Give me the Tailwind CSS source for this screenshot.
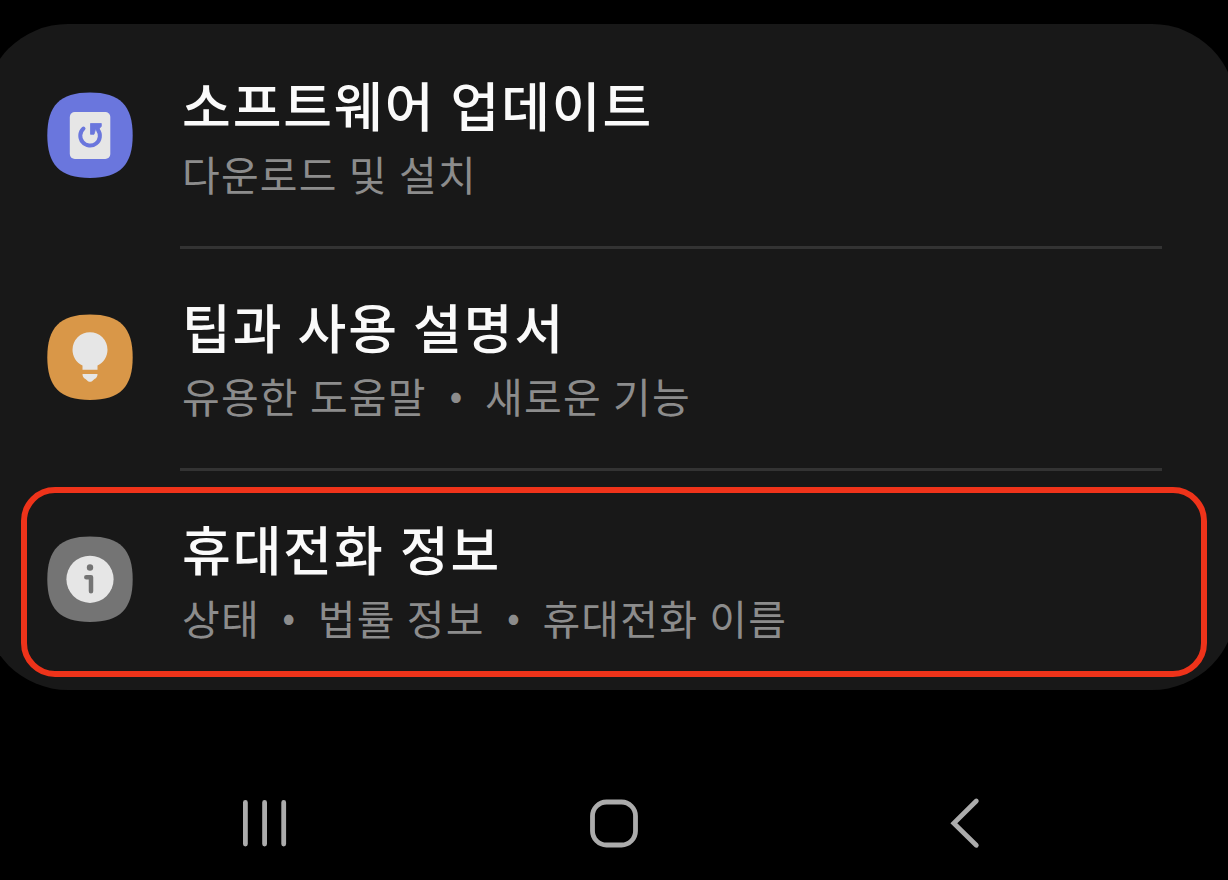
<!DOCTYPE html>
<html lang="ko">
<head>
    <meta charset="UTF-8">
    <meta name="viewport" content="width=device-width, initial-scale=1.0">
    <title>설정</title>
    <script src="https://cdn.jsdelivr.net/npm/@tailwindcss/browser@4"></script>
</head>
<body class="bg-black overflow-hidden font-['Noto_Sans_CJK_KR',sans-serif]">
    <div class="h-[880px] w-[1228px] flex flex-col overflow-hidden pt-6">
        <!-- Settings card -->
        <div class="relative -ml-4 w-[1252px] h-[666px] shrink-0 rounded-[84px] bg-[#181818] pl-[63px]">
            <!-- Software update -->
            <div class="h-[222px] flex items-center">
                <svg class="w-[86px] h-[86px] shrink-0" viewBox="0 0 86 86">
                    <path d="M43 .5C73 .5 85.700 13.500 85.700 43.300S73 86 43 86S.3 73 .3 43.300S13 .5 43 .5Z" fill="#6a76dd"/>
                    <rect x="22.800" y="20" width="40.500" height="47" rx="5" fill="#e6e6e6"/>
                    <path d="M36.500 36.500A9.800 9.800 0 1 0 51 38" fill="none" stroke="#6a76dd" stroke-width="4" stroke-linecap="round"/>
                    <path d="M43.500 31.500H54.300V34.300L51.500 37.500L48.500 37.500L47 42.300H43.500Z" fill="#6a76dd" stroke="#6a76dd" stroke-width=".8" stroke-linejoin="round"/>
                </svg>
                <div class="ml-[49px] pb-px">
                    <h2 class="text-[53px] leading-[74px] font-medium tracking-[1.9px] [word-spacing:-1.5px] text-[#fafafa]">소프트웨어 업데이트</h2>
                    <p class="mt-0.5 text-[41px] leading-[60px] tracking-[1.2px] [word-spacing:-1.5px] text-[#8c8c8c]">다운로드 및 설치</p>
                </div>
            </div>
            <!-- Tips and user manual -->
            <div class="h-[222px] flex items-center">
                <svg class="w-[86px] h-[86px] shrink-0" viewBox="0 0 86 86">
                    <path d="M43 .5C73 .5 85.700 13.500 85.700 43.300S73 86 43 86S.3 73 .3 43.300S13 .5 43 .5Z" fill="#d99748"/>
                    <path d="M35.500 55.700V51.500C29 48.500 25.500 42 25.500 35.700A17.500 17.500 0 0 1 60.500 35.700C60.500 42 57 48.500 50.500 51.500V55.700Z" fill="#e6e6e6"/>
                    <path d="M35.500 60H50.500C50.500 62.500 49.500 64 47.500 65L45 67.200Q43 68.500 41 67.200L38.500 65C36.500 64 35.500 62.500 35.500 60Z" fill="#e6e6e6"/>
                </svg>
                <div class="ml-[49px] pb-px">
                    <h2 class="text-[53px] leading-[74px] font-medium tracking-[1.9px] [word-spacing:-2.5px] text-[#fafafa]">팁과 사용 설명서</h2>
                    <p class="mt-0.5 text-[41px] leading-[60px] tracking-[1.2px] [word-spacing:-1.5px] text-[#8c8c8c]">유용한 도움말 <span class="inline-block w-9 text-center text-[38px] leading-none tracking-normal align-[4px]">•</span> 새로운 기능</p>
                </div>
            </div>
            <!-- About phone -->
            <div class="h-[222px] flex items-center">
                <svg class="w-[86px] h-[86px] shrink-0" viewBox="0 0 86 86">
                    <path d="M43 .5C73 .5 85.700 13.500 85.700 43.300S73 86 43 86S.3 73 .3 43.300S13 .5 43 .5Z" fill="#747474"/>
                    <circle cx="43" cy="43.300" r="23.600" fill="#e6e6e6"/>
                    <circle cx="43" cy="31.500" r="3.200" fill="#747474"/>
                    <path d="M39.300 41.200H44V55.200" fill="none" stroke="#747474" stroke-width="4.500" stroke-linecap="round" stroke-linejoin="round"/>
                </svg>
                <div class="ml-[49px] pb-px">
                    <h2 class="text-[53px] leading-[74px] font-medium tracking-[1.9px] [word-spacing:-1.5px] text-[#fafafa]">휴대전화 정보</h2>
                    <p class="mt-0.5 text-[41px] leading-[60px] tracking-[1.2px] [word-spacing:-1.5px] text-[#8c8c8c]">상태 <span class="inline-block w-[35.5px] text-center text-[38px] leading-none tracking-normal align-[4px]">•</span> 법률 정보 <span class="inline-block w-[35.5px] text-center text-[38px] leading-none tracking-normal align-[4px]">•</span> 휴대전화 이름</p>
                </div>
            </div>
            <!-- Row dividers -->
            <div class="absolute left-[196px] top-[222px] w-[982px] h-[3px] bg-[#333333]"></div>
            <div class="absolute left-[196px] top-[444px] w-[982px] h-[3px] bg-[#333333]"></div>
            <!-- Highlight -->
            <div class="absolute left-[37px] top-[463px] w-[1186px] h-[190px] rounded-[34px] border-6 border-[#ee331a]"></div>
        </div>

        <!-- Navigation bar -->
        <div class="mt-[103px] flex items-center">
            <svg class="ml-[240px] w-[50px] h-[60px]" viewBox="0 0 50 60">
                <path d="M5.400 9.500V51M24.600 9.500V51M43.700 9.500V51" stroke="#acacac" stroke-width="4.800" stroke-linecap="round"/>
            </svg>
            <svg class="ml-[294px] w-[60px] h-[60px]" viewBox="0 0 60 60">
                <rect x="8.500" y="9" width="43" height="43" rx="14" fill="none" stroke="#acacac" stroke-width="4.800"/>
            </svg>
            <svg class="ml-[296px] w-[50px] h-[60px]" viewBox="0 0 50 60">
                <path d="M36.300 8L13.800 30.300L36.300 52.300" fill="none" stroke="#acacac" stroke-width="4.800" stroke-linecap="round"/>
            </svg>
        </div>
    </div>
</body>
</html>
